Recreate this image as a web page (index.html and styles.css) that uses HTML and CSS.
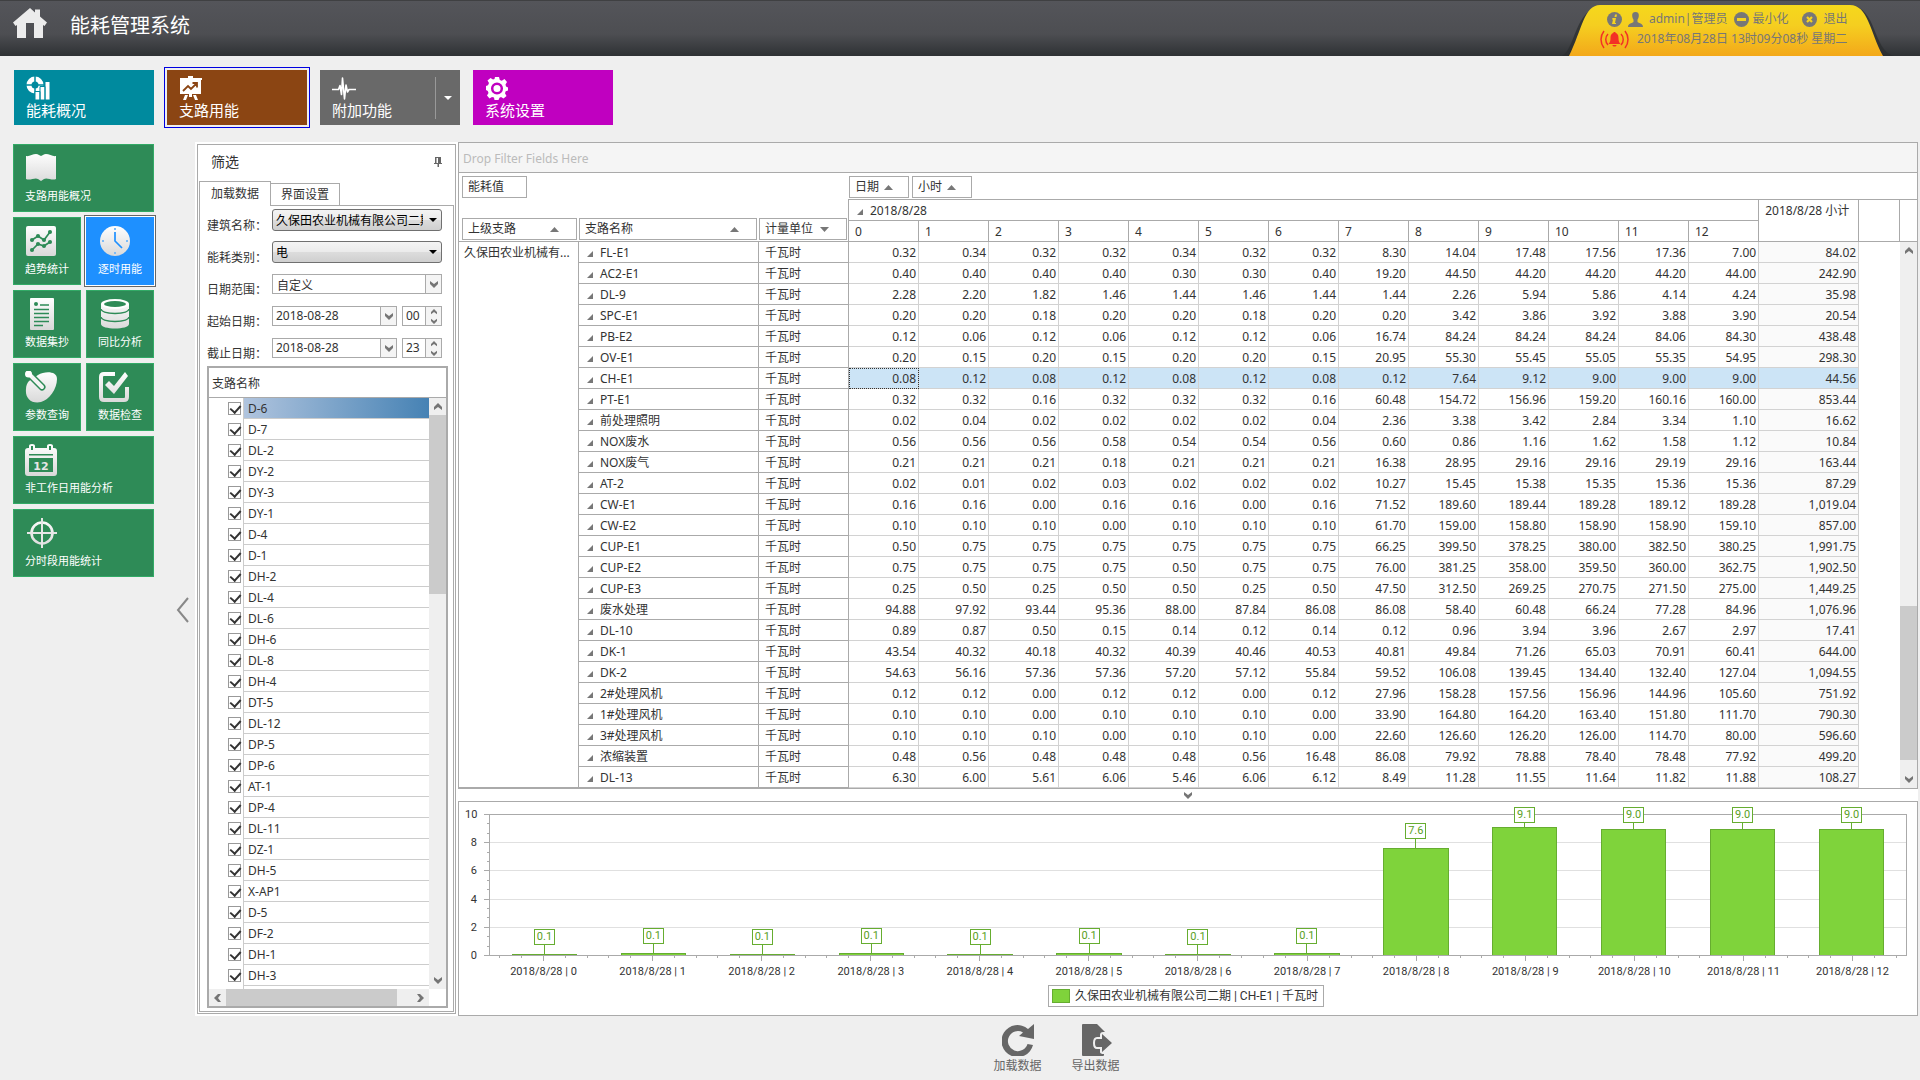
FILE: index.html
```html
<!DOCTYPE html>
<html lang="zh-CN">
<head>
<meta charset="utf-8">
<title>能耗管理系统</title>
<link rel="stylesheet" href="styles.css">
</head>
<body>
<svg class="defs" width="0" height="0" aria-hidden="true">
  <defs>
    <linearGradient id="silver" gradientUnits="userSpaceOnUse" x1="0" y1="0" x2="0" y2="32"><stop offset="0" stop-color="#fff"/><stop offset="1" stop-color="#d8d8d8"/></linearGradient>
    <linearGradient id="gold" x1="0" y1="0" x2="0" y2="1"><stop offset="0" stop-color="#f5d81c"/><stop offset=".4" stop-color="#f5ce20"/><stop offset="1" stop-color="#f3a81a"/></linearGradient>
    <symbol id="chev" viewBox="0 0 8 8"><path d="M0 1 4 4 8 1V4L4 8 0 4z" fill="#757575"/></symbol>
    <symbol id="up" viewBox="0 0 9 5"><path d="M0 5 4.500 0 9 5z" fill="#777"/></symbol>
    <symbol id="corner" viewBox="0 0 6 6"><path d="M6 0V6H0z" fill="#777"/></symbol>
  </defs>
</svg>

<header class="topbar">
  <svg class="home" viewBox="0 0 34 30"><path d="M17 0 22 4.500V1.500H27V8.500L34 14.500 31.500 18 30 17V30H21V15H13V30H4V17L2.500 18 0 14.500z" fill="#ececec"/></svg>
  <h1>能耗管理系统</h1>
  <div class="userbox">
    <svg class="userbox-bg" viewBox="0 0 332 56" preserveAspectRatio="none"><path d="M0 56C14 48 12 10 40 5H288C316 8 310 50 332 56z" fill="#2b2d2f" opacity=".75"/><path d="M7 56C20 30 22 5 38 5H288C306 5 308 32 321 56z" fill="url(#gold)"/></svg>
    <div class="user-row">
      <svg class="i15" viewBox="0 0 15 15"><circle cx="7.500" cy="7.500" r="7.500" fill="#777"/><path d="M8 2.500h2L9.500 5h-2zM5.500 6H9L8 11h1v1H5l1-4.500H5z" fill="#f5d31f"/></svg>
      <svg class="i15 person" viewBox="0 0 15 15"><path d="M7.500 0C10 0 11 1.600 10.800 4c-.2 2-.8 3-1.300 3.700V10c2 1.500 5.500 1.500 5.500 5H0c0-3.500 3.500-3.500 5.500-5V7.700C5 7 4.400 6 4.200 4 4 1.600 5 0 7.500 0z" fill="#777"/></svg>
      <span class="who">admin|管理员</span>
      <button class="link min"><svg class="i15" viewBox="0 0 15 15"><circle cx="7.500" cy="7.500" r="7.500" fill="#777"/><path d="M3 6h9v3H3z" fill="#f5d31f"/></svg>最小化</button>
      <button class="link quit"><svg class="i15" viewBox="0 0 15 15"><circle cx="7.500" cy="7.500" r="7.500" fill="#777"/><path d="m5 5 5 5M10 5l-5 5" stroke="#f5d31f" stroke-width="2.200"/></svg>退出</button>
    </div>
    <div class="time-row">
      <svg class="bell" viewBox="0 0 29 19"><path d="M14.500 3c3 0 4 2 4 5s.5 4 2 6h-12c1.500-2 2-3 2-6s1-5 4-5zM12.500 15h4c0 2-4 2-4 0zM13.500 2h2v2h-2z" fill="#f33026"/><g fill="none" stroke="#f33026" stroke-width="1.500"><path d="M4 1C0 6 0 13 4 18M8 4c-3 3-3 8 0 11M25 1c4 5 4 12 0 17M21 4c3 3 3 8 0 11"/></g></svg>
      <time>2018年08月28日 13时09分08秒 星期二</time>
    </div>
  </div>
</header>

<nav class="modules">
  <button class="module teal"><svg viewBox="0 0 24 24"><circle cx="9" cy="9" r="6" fill="none" stroke="#fff" stroke-width="5"/><path d="M9 0v6M0 9h6M12 9h6M9 12v6" stroke="#008a9e" stroke-width="1.500"/><path d="M9 15.500h5V24H9zM14 10.500h5V24h-5zM19 5.500h5V24h-5z" fill="#fff" stroke="#008a9e"/></svg><span>能耗概况</span></button>
  <button class="module brown active"><svg viewBox="0 0 24 24"><path d="M9 0h5v2h9v2H1V2h8zM1 4h21v14H1zM6 19h3l-2 5H4zM14 19h3l2 5h-3zM10 18h3v3h-3z" fill="#fff"/><path d="m4 15 5-5 3 3 6-6M13.500 7H18v4.500" fill="none" stroke="#8b4513" stroke-width="1.800"/></svg><span>支路用能</span></button>
  <button class="module gray"><svg viewBox="0 0 24 24"><path d="M0 13.500h6.500l1.500-4 1.500 9L10.500 2l2 21 1.500-14 1.500 7 1.500-2.500H24" fill="none" stroke="#fff" stroke-width="1.600" stroke-linejoin="round"/></svg><span>附加功能</span><i class="split"></i></button>
  <button class="module magenta"><svg viewBox="0 0 24 24"><path d="M10 1h4l.8 3 2 .8L19.500 3l2.500 3-1.500 2.500.5 2 2 1v3l-2.300.8-.7 2L21.500 20l-3 2.500-2.500-1.500-1.500.7L13.500 24h-4L9 21.500 7 21l-2.500 1.500L2 19.500 3.500 17 2.800 15 1 14v-4l2-.8L4 7 2.500 4.500 5.500 2 8 3.500 9.500 3z" fill="#fff"/><circle cx="12" cy="12.500" r="4.800" fill="#fff" stroke="#c000c0" stroke-width="2.500"/></svg><span>系统设置</span></button>
</nav>

<div class="page">
  <nav class="side">
    <button class="tile wide"><svg viewBox="0 0 32 32"><path d="M1 4c4 1 9-4 13-1l2 1 2-1c4-3 9 2 13 1v23c-4 2-9-2-12 0l-3 2-3-2c-3-2-8 2-12 0z" fill="url(#silver)"/></svg><span>支路用能概况</span></button>
    <button class="tile"><svg viewBox="0 0 32 32"><rect x="1" y="1" width="30" height="30" rx="2" fill="url(#silver)"/><g stroke="#2e8b57" stroke-width="1.700" fill="#2e8b57"><path d="m7 15 6-4 6 4 6-8M7 25l6-6 6 2 6-4" fill="none"/><circle cx="7" cy="15" r="1.200"/><circle cx="13" cy="11" r="1.200"/><circle cx="19" cy="15" r="1.200"/><circle cx="25" cy="7" r="1.200"/><circle cx="7" cy="25" r="1.200"/><circle cx="13" cy="19" r="1.200"/><circle cx="19" cy="21" r="1.200"/><circle cx="25" cy="17" r="1.200"/></g></svg><span>趋势统计</span></button>
    <button class="tile current"><svg viewBox="0 0 32 32"><circle cx="17" cy="16" r="15" fill="url(#silver)"/><path d="M17 7v9l7 7" fill="none" stroke="#1e90ff" stroke-width="1.700"/><path d="M16 3h2v2h-2zM16 27h2v2h-2zM4 15h2v2H4zM28 15h2v2h-2z" fill="#7cbcf8"/></svg><span>逐时用能</span></button>
    <button class="tile"><svg viewBox="0 0 32 32"><rect x="5" width="24" height="32" rx="1" fill="url(#silver)"/><circle cx="11" cy="6" r="2" fill="#2e8b57"/><path d="M15 7h9M9 11.500h15M9 15.500h15M9 19.500h15M9 23.500h15M9 27.500h9" stroke="#2e8b57" stroke-width="1.600"/></svg><span>数据集抄</span></button>
    <button class="tile"><svg viewBox="0 0 32 32"><path d="M3 6v20c0 6 28 6 28 0V6z" fill="url(#silver)"/><ellipse cx="17" cy="6" rx="14" ry="5" fill="#fff"/><ellipse cx="17" cy="6" rx="11" ry="3" fill="#2e8b57"/><path d="M3 11c1 6 27 6 28 0M3 19c1 6 27 6 28 0" fill="none" stroke="#2e8b57" stroke-width="1.500"/></svg><span>同比分析</span></button>
    <button class="tile"><svg viewBox="0 0 32 32"><path d="M13 4C20 0 32 0 32 8c0 10-8 21-16 23C6 33 0 27 1 18c0-3 1-6 3-8z" fill="url(#silver)"/><path d="m4 3 13 13" stroke="#2e8b57" stroke-width="7" stroke-linecap="round"/><path d="m4 3 13 13" stroke="#f4f4f4" stroke-width="4" stroke-linecap="round"/><circle cx="3.500" cy="3" r="3.500" fill="#fff"/></svg><span>参数查询</span></button>
    <button class="tile"><svg viewBox="0 0 32 32"><path d="M17 3H6Q3 3 3 6v20q0 3 3 3h20q3 0 3-3V16" fill="none" stroke="url(#silver)" stroke-width="4"/><path d="m7 14 4-4 5 5L27 1l3 4-14 18z" fill="url(#silver)"/></svg><span>数据检查</span></button>
    <button class="tile wide"><svg viewBox="0 0 32 32"><path d="M0 7q0-3 3-3h1V2q0-2 3-2t3 2v2h12V2q0-2 3-2t3 2v2h1q3 0 3 3v22q0 3-3 3H3q-3 0-3-3z" fill="url(#silver)"/><path d="M6 2h2v4H6zM24 2h2v4h-2zM4 10h24v1.500H4zM4 14h24v14H4z" fill="#2e8b57"/><text x="16" y="26" text-anchor="middle" class="cal-day">12</text></svg><span>非工作日用能分析</span></button>
    <button class="tile wide"><svg viewBox="0 0 32 32"><circle cx="17" cy="16" r="10.500" fill="none" stroke="url(#silver)" stroke-width="2.600"/><path d="M17.001 1 17 31M2 16.001 32 16" stroke="#e6e6e6" stroke-width="2"/></svg><span>分时段用能统计</span></button>
  </nav>
  <button class="collapse" aria-label="收起"><svg viewBox="0 0 13 26"><path d="M12 1 2 13l10 12" fill="none" stroke="#888" stroke-width="2"/></svg></button>

  <main class="content">
    <div class="workspace">
      <section class="filter">
        <div class="filter-title"><h2>筛选</h2><svg class="pin" viewBox="0 0 8 10"><path d="M1 0h6v6h1v1H5v3H3.500V7H0V6h1zM2.500 1v5H4V1z" fill="#666"/></svg></div>
        <div class="tabs"><button class="tab on">加载数据</button><button class="tab">界面设置</button></div>
        <div class="tab-page">
          <form class="form">
            <label for="building">建筑名称：</label>
            <div class="combo glossy"><select id="building"><option>久保田农业机械有限公司二期</option></select></div>
            <label for="kind">能耗类别：</label>
            <div class="combo glossy"><select id="kind"><option>电</option></select></div>
            <label for="range">日期范围：</label>
            <div class="combo flat"><select id="range"><option>自定义</option></select><span class="drop"><svg><use href="#chev"/></svg></span></div>
            <label for="from">起始日期：</label>
            <div class="pair"><div class="field"><input id="from" value="2018-08-28"><button type="button" class="drop" aria-label="选择"><svg><use href="#chev"/></svg></button></div><div class="field spin"><input aria-label="起始小时" value="00"><span class="steps"><button type="button" aria-label="加"><svg class="flip"><use href="#chev"/></svg></button><button type="button" aria-label="减"><svg><use href="#chev"/></svg></button></span></div></div>
            <label for="to">截止日期：</label>
            <div class="pair"><div class="field"><input id="to" value="2018-08-28"><button type="button" class="drop" aria-label="选择"><svg><use href="#chev"/></svg></button></div><div class="field spin"><input aria-label="截止小时" value="23"><span class="steps"><button type="button" aria-label="加"><svg class="flip"><use href="#chev"/></svg></button><button type="button" aria-label="减"><svg><use href="#chev"/></svg></button></span></div></div>
          </form>
          <div class="tree">
            <div class="tree-head">支路名称</div>
            <div class="tree-body">
              <div class="tree-rows" id="branches"></div>
              <div class="vscroll"><svg class="flip"><use href="#chev"/></svg><i class="track"><i class="thumb list-thumb"></i></i><svg><use href="#chev"/></svg></div>
            </div>
            <div class="hscroll"><svg class="left"><use href="#chev"/></svg><i class="thumb"></i><svg class="right"><use href="#chev"/></svg></div>
          </div>
        </div>
      </section>

      <div class="results">
        <section class="pivot">
          <div class="drop-zone">Drop Filter Fields Here</div>
          <div class="fields"><button class="fieldbox value">能耗值</button><div class="col-fields"><button class="fieldbox">日期<svg><use href="#up"/></svg></button><button class="fieldbox">小时<svg><use href="#up"/></svg></button></div></div>
          <div class="grid">
            <table>
              <colgroup><col class="c-parent"><col class="c-name"><col class="c-unit"><col span="13" class="c-hour"><col class="c-sum"><col></colgroup>
              <thead>
                <tr>
                  <th rowspan="2" class="rh first"><button class="fieldbox wide">上级支路<svg><use href="#up"/></svg></button></th>
                  <th rowspan="2" class="rh"><button class="fieldbox wide">支路名称<svg><use href="#up"/></svg></button></th>
                  <th rowspan="2" class="rh unit"><button class="fieldbox wide">计量单位<svg class="flip"><use href="#up"/></svg></button></th>
                  <th colspan="13" class="date"><svg class="exp"><use href="#corner"/></svg>2018/8/28</th>
                  <th rowspan="2" class="date total">2018/8/28 小计</th>
                  <th rowspan="2" class="date"></th>
                </tr>
                <tr id="hours"></tr>
              </thead>
              <tbody id="rows"></tbody>
            </table>
            <div class="grid-scroll"><div class="scroll-head"></div><div class="vscroll"><svg class="flip"><use href="#chev"/></svg><i class="track"><i class="thumb grid-thumb"></i></i><svg><use href="#chev"/></svg></div></div>
          </div>
        </section>
        <div class="splitter"><svg><use href="#chev"/></svg></div>
        <section class="chart">
          <div class="plot-row">
            <div class="y-labels"><span>10</span><span>8</span><span>6</span><span>4</span><span>2</span><span>0</span></div>
            <svg class="y-ticks" id="yticks"></svg>
            <div class="plot"><div class="gridlines"><i></i><i></i><i></i><i></i><i></i></div><div class="bars" id="bars"></div></div>
          </div>
          <div class="x-axis" id="xaxis"></div>
          <div class="legend"><i></i><span>久保田农业机械有限公司二期 | CH-E1 | 千瓦时</span></div>
        </section>
      </div>
    </div>
    <footer class="actions">
      <button><svg viewBox="0 0 32 32"><path d="M26 5 32 0V15L17 12l4-3.500A10 10 0 1 0 25.500 20L31 21A16 16 0 1 1 26 5z" fill="#666"/></svg>加载数据</button>
      <button><svg viewBox="0 0 32 32"><path d="M2 1q0-1 1-1H17l8 8H23q-3 0-3 3v2h-3q-4 0-4 6t4 6h3v3q0 2 4 2v1q0 1-1 1H3q-1 0-1-1z" fill="#666"/><path d="M22 10l10 9-10 9v-5h-5q-2 0-2-4t2-4h5z" fill="#666"/></svg>导出数据</button>
    </footer>
  </main>
</div>
<script src="app.js"></script>
</body>
</html>
```
FILE: styles.css
```css
* { box-sizing: border-box; }
body { margin: 0; min-height: 100vh; display: flex; flex-direction: column; background: #efefef; color: #333; font: 12px/20px "Noto Sans", "Noto Sans CJK SC", sans-serif; }
button, input, select { font: inherit; color: inherit; margin: 0; padding: 0; border: 0; background: none; border-radius: 0; min-width: 0; }
h1, h2 { margin: 0; font-weight: 400; }
svg { display: block; flex: none; }
i { display: block; }
.defs { position: absolute; }
svg:has(use) { width: 8px; height: 8px; }
.flip { transform: rotate(180deg); }
.left { transform: rotate(90deg); }
.right { transform: rotate(-90deg); }

/* header */
.topbar { height: 56px; display: flex; align-items: flex-start; background: linear-gradient(#54555a, #4d4e52 60%, #2e3134); border-top: 1px solid #3f4042; color: #fff; }
.home { width: 34px; height: 30px; margin: 7px 23px 0 13px; }
h1 { font-size: 20px; line-height: 50px; flex: 1; }
.userbox { position: relative; width: 332px; height: 56px; margin: -1px 26px 0 0; padding: 9px 0 0 45px; color: #777; }
.userbox-bg { position: absolute; left: 0; top: 0; width: 100%; height: 100%; }
.user-row, .time-row { position: relative; display: flex; align-items: center; height: 20px; white-space: nowrap; }
.i15 { width: 15px; height: 15px; }
.person { margin: 0 6px; }
.link { display: flex; align-items: center; gap: 3px; }
.min { margin-left: 7px; }
.quit { margin-left: 14px; gap: 6px; }
.bell { width: 29px; height: 19px; margin: 0 8px 0 -7px; }

/* module tiles */
.modules { display: flex; gap: 13px; padding: 14px 14px 17px; }
.module { position: relative; width: 140px; height: 55px; padding: 6px 12px 5px; text-align: left; color: #fff; font-size: 15px; line-height: 20px; }
.module svg { width: 24px; height: 24px; }
.module span { display: block; }
.teal { background: #008a9e; }
.brown { background: #8b4513; }
.gray { background: #696969; }
.magenta { background: #c000c0; }
.active { outline: 1px solid #0000e0; outline-offset: 2px; }
.split { position: absolute; right: 0; top: 7px; bottom: 6px; width: 25px; border-left: 1px solid #999; }
.split::after { content: ""; position: absolute; left: 8px; top: 19px; border: 4px solid transparent; border-top-color: #fff; border-bottom: 0; }

/* side menu */
.page { flex: 1; display: flex; }
.side { width: 154px; padding: 2px 0 0 13px; display: grid; grid-template-columns: 68px 68px; grid-auto-rows: 68px; gap: 5px; align-content: start; }
.tile { border: 1px solid #32aa66; background: #2e8b57; color: #fff; font-size: 11px; line-height: 24px; padding: 7px 0 3px 11px; text-align: left; }
.tile svg { width: 32px; height: 32px; }
.tile span { display: block; white-space: nowrap; }
.wide { grid-column: span 2; }
.current { background: #1e90ff; border-color: #1e90ff; outline: 1px solid #666; outline-offset: 1px; box-shadow: 0 0 0 1px #fff; }
.cal-day { font: bold 11px "DejaVu Sans", sans-serif; fill: #e6e6e6; }
.collapse { width: 41px; display: flex; align-items: center; justify-content: flex-end; padding: 0 6px 3px 0; }
.collapse svg { width: 13px; height: 26px; }

.content { flex: 1; min-width: 0; display: flex; flex-direction: column; margin-right: 2px; }
.workspace { display: flex; gap: 2px; background: #fff; }

/* filter panel */
.filter { width: 259px; flex: none; margin: 2px 0 2px 2px; border: 1px solid #aaa; padding: 0 1px 1px; display: flex; flex-direction: column; }
.filter-title { display: flex; align-items: center; justify-content: space-between; height: 36px; padding: 0 12px 2px; }
h2 { font-size: 14px; }
.pin { width: 8px; height: 10px; }
.tabs { display: flex; align-items: flex-end; height: 24px; }
.tab { border: 1px solid #aaa; border-bottom: 0; height: 22px; width: 70px; margin-left: -1px; }
.tab.on { width: 72px; height: 25px; margin: 0 0 -1px; background: #fff; position: relative; }
.tab-page { flex: 1; display: flex; flex-direction: column; border: 1px solid #aaa; padding: 3px 5px 3px 7px; }
.form { display: grid; grid-template-columns: 65px 170px; grid-auto-rows: 22px; row-gap: 10px; align-items: center; }
.form label { padding-top: 12px; white-space: nowrap; }
.combo { position: relative; display: flex; height: 20px; }
.combo select { appearance: none; flex: 1; padding: 1px 0 0 4px; }
.glossy { height: 22px; border: 1px solid #707070; border-radius: 3px; background: linear-gradient(#f4f4f4, #ebebeb 48%, #dcdcdc 52%, #cfcfcf); color: #000; }
.glossy select { padding-left: 3px; margin-right: 18px; }
.glossy::after { content: ""; position: absolute; right: 4px; top: 8px; border: 4px solid transparent; border-top-color: #000; border-bottom: 0; }
.flat, .field { border: 1px solid #aaa; background: #fff; }
.drop { width: 16px; border-left: 1px solid #aaa; background: #f4f4f4; display: flex; align-items: center; justify-content: center; }
.pair { display: flex; gap: 5px; }
.field { display: flex; height: 20px; flex: 1; }
.field input { flex: 1; width: 0; padding-left: 3px; }
.spin { flex: none; width: 40px; }
.steps { width: 16px; border-left: 1px solid #aaa; display: flex; flex-direction: column; background: #f4f4f4; }
.steps button { flex: 1; display: flex; align-items: center; justify-content: center; }
.steps svg { width: 6px; height: 6px; }

.tree { flex: 1; margin-top: 7px; border: 2px solid #aaa; display: flex; flex-direction: column; }
.tree-head { height: 30px; line-height: 31px; padding-left: 3px; border-bottom: 1px solid #aaa; }
.tree-body { flex: 1; display: flex; contain: size; overflow: hidden; }
.tree-rows { flex: 1; overflow: hidden; background: linear-gradient(#ccc, #ccc) 34px 0 / 1px 100% no-repeat; }
.branch { display: flex; align-items: center; height: 21px; padding-left: 19px; gap: 3px; }
.branch input { appearance: none; position: relative; width: 13px; height: 13px; border: 1px solid #999; }
.branch input::after { content: ""; position: absolute; left: 3px; top: 0; width: 5px; height: 8px; border: solid #333; border-width: 0 2px 2px 0; transform: rotate(42deg); }
.branch span { flex: 1; height: 21px; line-height: 22px; padding-left: 4px; border-bottom: 1px solid #ccc; }
.branch.sel span { background: linear-gradient(90deg, #b0c4de, #4682b4); }
.vscroll { width: 17px; flex: none; display: flex; flex-direction: column; align-items: center; padding: 5px 0; background: #efefef; }
.track { flex: 1; width: 17px; margin: 4px 0; display: flex; flex-direction: column; }
.thumb { background: #cbcbcb; }
.list-thumb { height: 179px; }
.hscroll { height: 17px; margin-right: 17px; background: #efefef; display: flex; align-items: center; padding: 0 5px 0 5px; }
.hscroll .thumb { height: 17px; width: 171px; margin: 0 auto 0 4px; }

/* pivot grid */
.results { flex: 1; min-width: 0; }
.pivot { border: 1px solid #aaa; }
.drop-zone { height: 30px; line-height: 32px; padding-left: 4px; background: #f5f5f5; border-bottom: 1px solid #aaa; color: #bbb; }
.fields { display: grid; grid-template-columns: 387px 1fr; padding: 3px 0 1px 3px; }
.col-fields { display: flex; gap: 3px; }
.fieldbox { display: flex; align-items: center; gap: 5px; width: 60px; height: 22px; border: 1px solid #aaa; background: #fff; padding: 0 5px; white-space: nowrap; }
.fieldbox svg { width: 9px; height: 5px; }
.fieldbox.value { width: 65px; }
.fieldbox.wide { width: 100%; justify-content: space-between; padding-right: 17px; }
.grid { display: flex; }
table { flex: 1; width: 0; table-layout: fixed; border-spacing: 0; }
.c-parent { width: 120px; }
.c-name { width: 180px; }
.c-unit { width: 90px; }
.c-hour { width: 70px; }
.c-sum { width: 100px; }
th, td { padding: 2px 0 0; font-weight: 400; text-align: left; white-space: nowrap; line-height: 18px; }
.rh { vertical-align: bottom; border-bottom: 1px solid #aaa; padding: 0 2px 1px 0; }
.rh.first { padding-left: 3px; }
.rh.unit { border-right: 1px solid #aaa; padding-right: 1px; }
.date { border: solid #aaa; border-width: 1px 1px 1px 0; height: 22px; padding-left: 8px; }
.total { vertical-align: top; padding-left: 6px; }
.exp { width: 6px; height: 6px; display: inline-block; margin-right: 7px; }
#hours th { height: 21px; border: solid #aaa; border-width: 0 1px 1px 0; padding-left: 6px; }
tbody td { height: 21px; border: solid #d2d2d2; border-width: 0 1px 1px 0; text-align: right; padding-right: 2px; }
td.head { border-color: #aaa; text-align: left; padding-left: 6px; }
td.head.name { padding-left: 8px; }
td.head.parent { vertical-align: top; padding: 2px 0 0 5px; }
td.sum { background: #fafafa; }
td.blank { border: 0; }
.hit td:not(.head):not(.blank) { background: #cce4f6; }
td.focus { outline: 1px dotted #333; outline-offset: -1px; }
.grid-scroll { width: 17px; display: flex; flex-direction: column; }
.scroll-head { height: 43px; border: solid #aaa; border-width: 1px 0; }
.grid-scroll .vscroll { flex: 1; }
.grid-thumb { height: 154px; margin: auto 0 11px; }
.splitter { height: 12px; display: flex; align-items: center; justify-content: center; }

/* chart */
.chart { border: 1px solid #aaa; padding: 12px 10px 8px 6px; font-family: Roboto, "Noto Sans CJK SC", sans-serif; font-size: 11px; }
.plot-row { display: flex; height: 142px; }
.y-labels { width: 12px; display: flex; flex-direction: column; justify-content: space-between; text-align: right; margin: 1px 7px 0 0; }
.y-labels span { height: 0; line-height: 0; }
.y-ticks { width: 5px; height: 142px; overflow: visible; }
.plot { flex: 1; position: relative; border: 1px solid #aaa; }
.gridlines { height: 100%; display: flex; flex-direction: column; }
.gridlines i { flex: 1; }
.gridlines i + i { border-top: 1px solid #e0e0e0; }
.bars { position: absolute; left: 0; right: 0; top: 0; bottom: 0; display: flex; }
.slot { flex: 1; display: flex; flex-direction: column; justify-content: flex-end; align-items: center; }
.tag { flex: none; width: 21px; height: 16px; line-height: 14px; text-align: center; border: 1px solid #66ad30; background: #fff; color: #5aa024; }
.stem { flex: none; width: 1px; background: #66ad30; }
.bar { flex: none; width: 60%; min-height: 1px; background: #7fd33b; border: 1px solid #66ad30; border-bottom: 0; }
.x-axis { display: flex; margin-left: 24px; }
.x-axis div { flex: 1; text-align: center; white-space: nowrap; line-height: 22px; }
.x-axis svg { width: 100%; height: 5px; }
line { stroke: #aaa; shape-rendering: crispEdges; }
.legend { width: fit-content; height: 22px; margin: 2px auto 0; border: 1px solid #aaa; display: flex; align-items: center; gap: 5px; padding: 0 5px 0 3px; font-size: 12px; }
.legend i { width: 18px; height: 14px; background: #7fd33b; border: 1px solid #66ad30; }

.actions { display: flex; justify-content: center; gap: 30px; padding-top: 8px; }
.actions button { display: flex; flex-direction: column; align-items: center; width: 48px; white-space: nowrap; color: #666; }
.actions svg { width: 32px; height: 32px; }
```
FILE: app.js
```js
const branches = 'D-6,D-7,DL-2,DY-2,DY-3,DY-1,D-4,D-1,DH-2,DL-4,DL-6,DH-6,DL-8,DH-4,DT-5,DL-12,DP-5,DP-6,AT-1,DP-4,DL-11,DZ-1,DH-5,X-AP1,D-5,DF-2,DH-1,DH-3'.split(',');
document.getElementById('branches').innerHTML = branches.map((b, i) =>
  `<label class="branch${i ? '' : ' sel'}"><input type="checkbox" checked><span>${b}</span></label>`).join('');

const data = `FL-E1 0.32 0.34 0.32 0.32 0.34 0.32 0.32 8.30 14.04 17.48 17.56 17.36 7.00 84.02
AC2-E1 0.40 0.40 0.40 0.40 0.30 0.30 0.40 19.20 44.50 44.20 44.20 44.20 44.00 242.90
DL-9 2.28 2.20 1.82 1.46 1.44 1.46 1.44 1.44 2.26 5.94 5.86 4.14 4.24 35.98
SPC-E1 0.20 0.20 0.18 0.20 0.20 0.18 0.20 0.20 3.42 3.86 3.92 3.88 3.90 20.54
PB-E2 0.12 0.06 0.12 0.06 0.12 0.12 0.06 16.74 84.24 84.24 84.24 84.06 84.30 438.48
OV-E1 0.20 0.15 0.20 0.15 0.20 0.20 0.15 20.95 55.30 55.45 55.05 55.35 54.95 298.30
CH-E1 0.08 0.12 0.08 0.12 0.08 0.12 0.08 0.12 7.64 9.12 9.00 9.00 9.00 44.56
PT-E1 0.32 0.32 0.16 0.32 0.32 0.32 0.16 60.48 154.72 156.96 159.20 160.16 160.00 853.44
前处理照明 0.02 0.04 0.02 0.02 0.02 0.02 0.04 2.36 3.38 3.42 2.84 3.34 1.10 16.62
NOX废水 0.56 0.56 0.56 0.58 0.54 0.54 0.56 0.60 0.86 1.16 1.62 1.58 1.12 10.84
NOX废气 0.21 0.21 0.21 0.18 0.21 0.21 0.21 16.38 28.95 29.16 29.16 29.19 29.16 163.44
AT-2 0.02 0.01 0.02 0.03 0.02 0.02 0.02 10.27 15.45 15.38 15.35 15.36 15.36 87.29
CW-E1 0.16 0.16 0.00 0.16 0.16 0.00 0.16 71.52 189.60 189.44 189.28 189.12 189.28 1,019.04
CW-E2 0.10 0.10 0.10 0.00 0.10 0.10 0.10 61.70 159.00 158.80 158.90 158.90 159.10 857.00
CUP-E1 0.50 0.75 0.75 0.75 0.75 0.75 0.75 66.25 399.50 378.25 380.00 382.50 380.25 1,991.75
CUP-E2 0.75 0.75 0.75 0.75 0.50 0.75 0.75 76.00 381.25 358.00 359.50 360.00 362.75 1,902.50
CUP-E3 0.25 0.50 0.25 0.50 0.50 0.25 0.50 47.50 312.50 269.25 270.75 271.50 275.00 1,449.25
废水处理 94.88 97.92 93.44 95.36 88.00 87.84 86.08 86.08 58.40 60.48 66.24 77.28 84.96 1,076.96
DL-10 0.89 0.87 0.50 0.15 0.14 0.12 0.14 0.12 0.96 3.94 3.96 2.67 2.97 17.41
DK-1 43.54 40.32 40.18 40.32 40.39 40.46 40.53 40.81 49.84 71.26 65.03 70.91 60.41 644.00
DK-2 54.63 56.16 57.36 57.36 57.20 57.12 55.84 59.52 106.08 139.45 134.40 132.40 127.04 1,094.55
2#处理风机 0.12 0.12 0.00 0.12 0.12 0.00 0.12 27.96 158.28 157.56 156.96 144.96 105.60 751.92
1#处理风机 0.10 0.10 0.00 0.10 0.10 0.10 0.00 33.90 164.80 164.20 163.40 151.80 111.70 790.30
3#处理风机 0.10 0.10 0.10 0.00 0.10 0.10 0.00 22.60 126.60 126.20 126.00 114.70 80.00 596.60
浓缩装置 0.48 0.56 0.48 0.48 0.48 0.56 16.48 86.08 79.92 78.88 78.40 78.48 77.92 499.20
DL-13 6.30 6.00 5.61 6.06 5.46 6.06 6.12 8.49 11.28 11.55 11.64 11.82 11.88 108.27`
  .split('\n').map(line => line.split(' '));

const selected = 'CH-E1';
const hours = [...Array(13).keys()];
document.getElementById('hours').innerHTML = hours.map(h => `<th>${h}</th>`).join('');
document.getElementById('rows').innerHTML = data.map(([name, ...nums], r) => {
  const hit = name === selected;
  const parent = r ? '' : `<td class="head parent" rowspan="${data.length}">久保田农业机械有...</td>`;
  const cells = nums.map((n, i) => `<td${i === 13 ? ' class="sum"' : hit && !i ? ' class="focus"' : ''}>${n}</td>`).join('');
  return `<tr${hit ? ' class="hit"' : ''}>${parent}<td class="head name"><svg class="exp"><use href="#corner"/></svg>${name}</td><td class="head">千瓦时</td>${cells}<td class="blank"></td></tr>`;
}).join('');

/* hourly chart of the selected branch; the value tag stays near the top edge for tall bars */
const series = data.find(d => d[0] === selected).slice(1, 14).map(Number);
document.getElementById('bars').innerHTML = series.map(v => {
  const stem = Math.min(9, Math.round(132 - v * 14));
  return `<div class="slot"><span class="tag">${v < 1 ? '0.1' : v.toFixed(1)}</span><i class="stem" style="height:${stem}px"></i><i class="bar" style="height:${v * 10}%"></i></div>`;
}).join('');
document.getElementById('xaxis').innerHTML = hours.map(h =>
  `<div><svg>${[10, 30, 50, 70, 90].map(x => `<line x1="${x}%" x2="${x}%" y1="0" y2="${x === 50 ? 5 : 2}"/>`).join('')}</svg>2018/8/28 | ${h}</div>`).join('');
document.getElementById('yticks').innerHTML = [...Array(16).keys()].map(i => {
  const y = Math.round(i * 9.4) + 0.5;
  return `<line x1="${i % 3 ? 3 : 0}" x2="5" y1="${y}" y2="${y}"/>`;
}).join('');
```
